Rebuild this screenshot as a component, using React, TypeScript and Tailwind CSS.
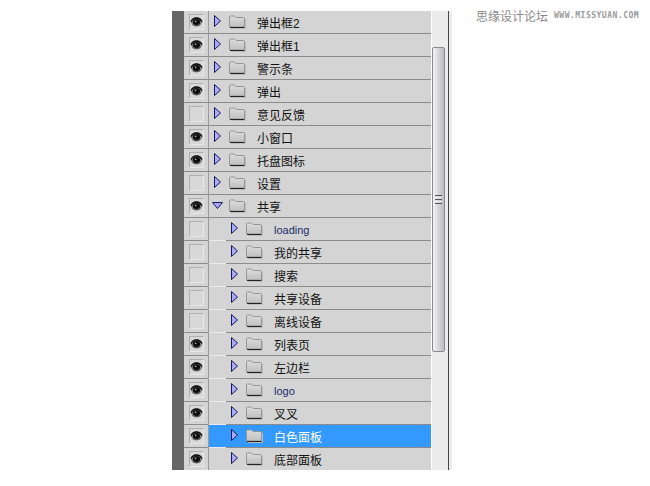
const layers = [
  { name: '弹出框2', eye: true },
  { name: '弹出框1', eye: true },
  { name: '警示条', eye: true },
  { name: '弹出', eye: true },
  { name: '意见反馈', eye: false },
  { name: '小窗口', eye: true },
  { name: '托盘图标', eye: true },
  { name: '设置', eye: false },
  { name: '共享', eye: true, open: true },
  { name: 'loading', eye: false, child: true, latin: true },
  { name: '我的共享', eye: false, child: true },
  { name: '搜索', eye: false, child: true },
  { name: '共享设备', eye: false, child: true },
  { name: '离线设备', eye: false, child: true },
  { name: '列表页', eye: true, child: true },
  { name: '左边栏', eye: true, child: true },
  { name: 'logo', eye: true, child: true, latin: true },
  { name: '叉叉', eye: true, child: true },
  { name: '白色面板', eye: true, child: true, selected: true },
  { name: '底部面板', eye: true, child: true },
];

function Eye() {
  return (
    <svg width="13" height="10" viewBox="0 0 13 10">
      <path d="M0.5 5 C2.5 1 4.5 0.5 6.5 0.5 C8.5 0.5 10.5 1 12.5 5 C10.5 8.5 8.5 9.5 6.5 9.5 C4.5 9.5 2.5 8.5 0.5 5 Z" fill="#7c7c7c" />
      <path d="M1 4.5 C2.5 1.5 4.5 1 6.5 1 C8.5 1 10.5 1.5 12 4.5" fill="none" stroke="#0c0c0c" strokeWidth="1.4" />
      <ellipse cx="6.5" cy="5" rx="3.6" ry="2.9" fill="#0c0c0c" />
      <circle cx="5.6" cy="4.4" r="0.8" fill="#bbb" />
      <path d="M2.5 7.6 C4.5 9 8.5 9 10.5 7.6" fill="none" stroke="#444" strokeWidth="0.8" />
    </svg>
  );
}

function Arrow({ open }: { open?: boolean }) {
  if (open) {
    return (
      <svg width="11" height="7" viewBox="0 0 11 7">
        <path d="M0.5 0.5 H10.5 L5.5 6.5 Z" fill="#a9a9f5" stroke="#17175f" />
      </svg>
    );
  }
  return (
    <svg width="7" height="12" viewBox="0 0 7 12">
      <path d="M0.5 0.5 L6.5 6 L0.5 11.5 Z" fill="#aaaaf6" stroke="#17175f" />
    </svg>
  );
}

function Folder() {
  return (
    <svg width="17" height="14" viewBox="0 0 17 14">
      <defs>
        <linearGradient id="fld" x1="0" y1="0" x2="0" y2="1">
          <stop offset="0" stopColor="#dcdcdc" />
          <stop offset="1" stopColor="#c0c0c0" />
        </linearGradient>
      </defs>
      <path d="M16.5 4 V13.5 H2" fill="none" stroke="#bcbcbc" />
      <path d="M0.5 12 V2 Q0.5 1 1.5 1 H5.5 L7 2.5 H14.5 Q15.5 2.5 15.5 3.5 V12 Z" fill="url(#fld)" stroke="#969696" />
      <path d="M1 12.5 H15.5" stroke="#222" strokeWidth="1" />
    </svg>
  );
}

function LayerRow({ layer }: { layer: (typeof layers)[number] }) {
  return (
    <div className="flex h-[23px] shrink-0 items-stretch">
      <div className="flex w-[25px] shrink-0 items-center border-b border-r border-b-[#8c8c8c] border-r-[#9a9a9a] pl-[5px]">
        <div className="flex h-[16px] w-[15px] items-center justify-center border border-t-[#b0b0b0] border-l-[#b0b0b0] border-r-[#e8e8e8] border-b-[#e8e8e8] bg-[#d8d8d8]">
          {layer.eye && (
            <div className="shrink-0">
              <Eye />
            </div>
          )}
        </div>
      </div>
      <div className={`flex flex-1 items-stretch ${layer.selected ? 'bg-[#3399ff]' : ''}`}>
        {layer.child && <div className="w-[17px] shrink-0 border-b border-b-[#ececec]" />}
        <div className="flex flex-1 items-center border-b border-b-[#8c8c8c] pl-[3px]">
          <div className="flex w-[11px] justify-center pb-[2px]">
            <Arrow open={layer.open} />
          </div>
          <div className="ml-[6px] flex pb-[1px]">
            <Folder />
          </div>
          <span
            className={`ml-[11px] whitespace-nowrap pt-[3px] leading-none ${layer.latin ? 'text-[11px]' : 'text-[12px]'} ${layer.selected ? 'text-white' : layer.latin ? 'text-[#1b2a6b]' : 'text-[#111]'}`}
            style={{ fontFamily: '"Liberation Sans", "Noto Sans CJK SC", sans-serif' }}
          >
            {layer.name}
          </span>
        </div>
      </div>
    </div>
  );
}

function Scrollbar() {
  return (
    <div className="flex w-[21px] shrink-0">
      <div className="flex w-[17px] flex-col border-l border-l-white bg-[#ececec] pt-[36px]">
        <div className="flex h-[305px] w-[13px] items-center justify-center rounded-[2px] border border-[#8a8a8a] bg-gradient-to-r from-[#f4f4f4] via-[#d6d6d8] to-[#bcbcc0]">
          <div className="flex w-[7px] flex-col gap-[1px]">
            <div className="h-[1px] bg-[#555]" />
            <div className="h-[1px] bg-[#eee]" />
            <div className="h-[1px] bg-[#555]" />
            <div className="h-[1px] bg-[#eee]" />
            <div className="h-[1px] bg-[#555]" />
          </div>
        </div>
      </div>
      <div className="w-[1px] bg-[#444]" />
      <div className="w-[3px] bg-[#ececec]" />
    </div>
  );
}

export default function App() {
  return (
    <div className="relative h-[486px] w-[650px] overflow-hidden bg-white pl-[172px] pt-[11px]">
      <div className="flex h-[459px] w-[280px]">
        <div className="w-[12px] shrink-0 bg-[#666666]" />
        <div className="flex w-[247px] shrink-0 flex-col overflow-hidden bg-[#d4d4d4]">
          {layers.map((layer) => (
            <LayerRow key={layer.name} layer={layer} />
          ))}
        </div>
        <Scrollbar />
      </div>
      <div className="absolute left-[476px] top-[7px] flex items-center whitespace-nowrap text-[#8a8a8a]">
        <span className="text-[12px]" style={{ fontFamily: '"Noto Sans CJK SC", sans-serif' }}>思缘设计论坛</span>
        <span className="ml-[6px] text-[8px] font-bold tracking-[0.5px] text-[#9a9a9a]" style={{ fontFamily: '"DejaVu Sans Mono", monospace' }}>WWW.MISSYUAN.COM</span>
      </div>
    </div>
  );
}
